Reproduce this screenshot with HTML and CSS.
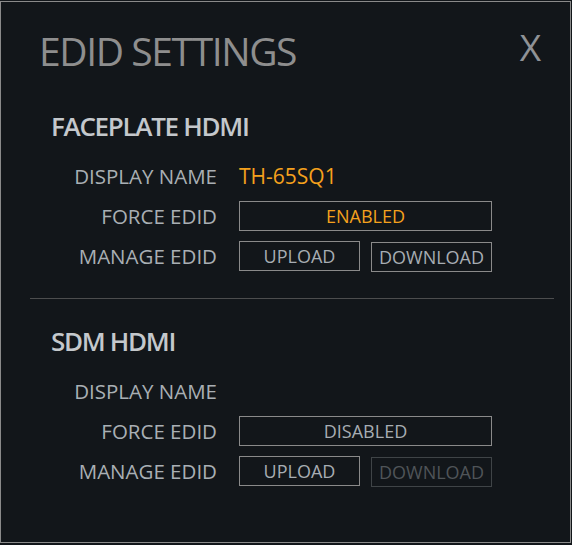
FILE: index.html
```html
<!DOCTYPE html>
<html lang="en">
<head>
<meta charset="utf-8">
<title>EDID Settings</title>
<link rel="stylesheet" href="styles.css">
</head>
<body>
<div class="dialog">
  <div class="header">
    <h1 class="title">EDID SETTINGS</h1>
    <span class="close">X</span>
  </div>

  <section class="section first">
    <h2 class="section-title">FACEPLATE HDMI</h2>
    <div class="grid">
      <div class="label">DISPLAY NAME</div>
      <div class="value">TH-65SQ1</div>
      <div class="label">FORCE EDID</div>
      <div class="box active">ENABLED</div>
      <div class="label">MANAGE EDID</div>
      <div class="buttons">
        <div class="btn">UPLOAD</div>
        <div class="btn lower">DOWNLOAD</div>
      </div>
    </div>
  </section>

  <hr class="divider">

  <section class="section second">
    <h2 class="section-title">SDM HDMI</h2>
    <div class="grid">
      <div class="label">DISPLAY NAME</div>
      <div class="value"></div>
      <div class="label">FORCE EDID</div>
      <div class="box">DISABLED</div>
      <div class="label">MANAGE EDID</div>
      <div class="buttons">
        <div class="btn">UPLOAD</div>
        <div class="btn lower disabled">DOWNLOAD</div>
      </div>
    </div>
  </section>
</div>
</body>
</html>
```

FILE: styles.css
```css
html, body {
  margin: 0;
  padding: 0;
  background: #12161a;
}

body {
  font-family: "Open Sans", "DejaVu Sans", sans-serif;
}

.dialog {
  box-sizing: border-box;
  width: 571px;
  height: 542px;
  margin-top: 1px;
  border: 1px solid #8a8a8a;
  background: #12161a;
}

.header {
  display: flex;
  justify-content: space-between;
  align-items: flex-start;
  padding: 29px 29px 0 38px;
}

.title {
  margin: 0;
  font-size: 39px;
  line-height: 39px;
  font-weight: 400;
  letter-spacing: -1.4px;
  color: #8e8e8e;
}

.close {
  font-size: 37px;
  line-height: 37px;
  margin-top: -3px;
  color: #8f9296;
}

.section {
  padding-left: 50px;
}

.section.first {
  margin-top: 43px;
}

.section.second {
  margin-top: 29px;
}

.section-title {
  margin: 0 0 22px 0;
  font-size: 26px;
  line-height: 26px;
  font-weight: 600;
  letter-spacing: -1.3px;
  color: #c4c8cc;
}

.grid {
  display: grid;
  grid-template-columns: 166px 253px;
  grid-auto-rows: 30px;
  column-gap: 22px;
  row-gap: 10px;
  align-items: center;
}

.label {
  text-align: right;
  font-size: 20.5px;
  line-height: 30px;
  color: #a9afb4;
}

.value {
  font-size: 21px;
  line-height: 30px;
  color: #f5a11d;
}

.box {
  box-sizing: border-box;
  height: 30px;
  border: 1px solid #8a8a8a;
  text-align: center;
  font-size: 18px;
  line-height: 28px;
  color: #a7adb3;
}

.box.active {
  color: #f5a11d;
}

.buttons {
  display: flex;
  justify-content: space-between;
  height: 30px;
}

.btn {
  box-sizing: border-box;
  width: 121px;
  height: 30px;
  border: 1px solid #8a8a8a;
  text-align: center;
  font-size: 18px;
  line-height: 28px;
  color: #a7adb3;
  white-space: nowrap;
  overflow: hidden;
}

.btn.lower {
  margin-top: 1px;
}

.btn.disabled {
  border-color: #3f4447;
  color: #4f5458;
}

.divider {
  margin: 27px 16px 0 29px;
  border: 0;
  height: 1px;
  background: #4c4d4e;
}
```
